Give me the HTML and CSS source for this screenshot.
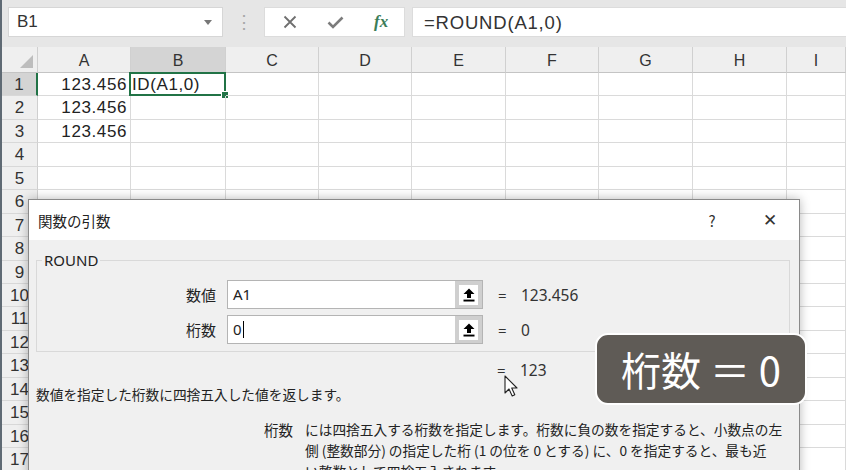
FILE: index.html
```html
<!DOCTYPE html>
<html lang="ja">
  <head>
    <meta charset="UTF-8">
    <meta name="viewport" content="width=device-width, initial-scale=1.0">
    <title>関数の引数</title>
    <link rel="stylesheet" href="styles.css">
  </head>
  <body>
    <div class="app">
      <div class="toolbar">
        <div class="namebox"><span>B1</span><span class="drop"></span></div>
        <div class="grip">⋮</div>
        <div class="fbuttons">
          <span class="fbtn">
            <svg width="14" height="14" viewBox="0 0 14 14"><path d="M1.5 1.5 L12.5 12.5 M12.5 1.5 L1.5 12.5" stroke="#6f6f6f" stroke-width="1.8" fill="none"/></svg>
          </span>
          <span class="fbtn">
            <svg width="17" height="13" viewBox="0 0 17 13"><path d="M1.5 6.5 L6 11 L15.5 1.5" stroke="#7c7c7c" stroke-width="2.6" fill="none"/></svg>
          </span>
          <span class="fbtn fx">fx</span>
        </div>
        <div class="formula">=ROUND(A1,0)</div>
      </div>

      <div class="sheet" id="sheet"></div>

      <div class="dialog">
        <div class="dlg-title">
          <span>関数の引数</span>
          <div class="dlg-buttons">
            <span>?</span>
            <span class="close">✕</span>
          </div>
        </div>
        <div class="dlg-body">
          <fieldset class="group">
            <legend>ROUND</legend>
            <div class="args">
              <label>数値</label>
              <div class="argbox"><span class="argtext">A1</span><span class="ref"><span class="ref-inner"><svg width="12" height="14" viewBox="0 0 12 14"><path d="M6 0.5 L11.5 6 H8 V10 H4 V6 H0.5 Z"/><rect x="0.5" y="11.6" width="11" height="1.9"/></svg></span></span></div>
              <span class="eq">=</span>
              <span class="val">123.456</span>

              <label>桁数</label>
              <div class="argbox"><span class="argtext">0<i class="caret"></i></span><span class="ref"><span class="ref-inner"><svg width="12" height="14" viewBox="0 0 12 14"><path d="M6 0.5 L11.5 6 H8 V10 H4 V6 H0.5 Z"/><rect x="0.5" y="11.6" width="11" height="1.9"/></svg></span></span></div>
              <span class="eq">=</span>
              <span class="val">0</span>
            </div>
          </fieldset>

          <div class="args result">
            <span></span>
            <span></span>
            <span class="eq">=</span>
            <span class="val">123</span>
          </div>

          <p class="summary">数値を指定した桁数に四捨五入した値を返します。</p>

          <div class="argdesc">
            <span class="argname">桁数</span>
            <p>には四捨五入する桁数を指定します。桁数に負の数を指定すると、小数点の左<br>側 (整数部分) の指定した桁 (1 の位を 0 とする) に、0 を指定すると、最も近<br>い整数として四捨五入されます。</p>
          </div>
        </div>
      </div>

      <div class="badge">桁数 ＝ 0</div>

      <svg class="cursor" width="15" height="23" viewBox="0 0 15 23">
        <path d="M1 1 V18 L5 14 L8.2 21 L10.8 19.8 L7.7 13 H13 Z" fill="#fff" stroke="#222" stroke-width="1.1" stroke-linejoin="round"/>
      </svg>
    </div>

    <script>
      // シートの見出しとセルを作る
      const cols = ['', 'A', 'B', 'C', 'D', 'E', 'F', 'G', 'H', 'I'];
      const values = { A1: '123.456', A2: '123.456', A3: '123.456', B1: 'ID(A1,0)' };
      const sheet = document.getElementById('sheet');

      for (let r = 0; r <= 17; r++) {
        cols.forEach(function (c, i) {
          const cell = document.createElement('div');
          if (r === 0) {
            cell.className = i === 0 ? 'corner' : 'col-head';
            cell.textContent = c;
            if (c === 'B') cell.classList.add('selected');
          } else if (i === 0) {
            cell.className = 'row-head';
            cell.textContent = r;
            if (r === 1) cell.classList.add('selected');
          } else {
            const key = c + r;
            cell.className = 'cell';
            if (values[key]) cell.textContent = values[key];
            if (c === 'A') cell.classList.add('num');
            if (key === 'B1') cell.classList.add('active');
          }
          sheet.appendChild(cell);
        });
      }
    </script>
  </body>
</html>
```

FILE: styles.css
```css
html, body {
  margin: 0;
  padding: 0;
}

body {
  font-family: "Liberation Sans", "Noto Sans CJK JP", sans-serif;
  color: #222;
}

.app {
  position: relative;
  width: 846px;
  height: 470px;
  overflow: hidden;
  background-color: #fff;
  border-left: 2px solid #5f6a74;
  box-sizing: border-box;
}

/* 数式バー */
.toolbar {
  display: flex;
  height: 47px;
  padding: 7px 0 0 6px;
  box-sizing: border-box;
  background-color: #e6e6e6;
}

.namebox {
  display: flex;
  align-items: center;
  justify-content: space-between;
  width: 215px;
  height: 30px;
  padding: 0 10px 0 8px;
  box-sizing: border-box;
  background-color: #fff;
  border: 1px solid #d6d6d6;
  font-size: 17px;
  color: #333;
}

.drop {
  width: 0;
  height: 0;
  border-left: 4px solid transparent;
  border-right: 4px solid transparent;
  border-top: 5px solid #777;
}

.grip {
  width: 41px;
  height: 30px;
  line-height: 30px;
  text-align: center;
  color: #a8a8a8;
  font-size: 18px;
}

.fbuttons {
  display: flex;
  width: 141px;
  height: 30px;
  padding-left: 2px;
  box-sizing: border-box;
  background-color: #fff;
  border: 1px solid #dcdcdc;
}

.fbtn {
  display: flex;
  align-items: center;
  justify-content: center;
  width: 46px;
}

.fx {
  font-family: "Liberation Serif", serif;
  font-style: italic;
  font-weight: bold;
  font-size: 17px;
  color: #3c7d58;
}

.formula {
  flex: 1;
  height: 30px;
  margin-left: 7px;
  padding-left: 11px;
  line-height: 29px;
  box-sizing: border-box;
  background-color: #fff;
  border: 1px solid #dcdcdc;
  border-right: none;
  font-size: 18.5px;
  letter-spacing: 0.8px;
  color: #333;
}

/* シート */
.sheet {
  display: grid;
  grid-template-columns: 36px 93px 95px 93px 93px 94px 93px 94px 94px 1fr;
  grid-template-rows: 26px;
  grid-auto-rows: 23.44px;
}

.sheet > div {
  box-sizing: border-box;
}

.corner {
  position: relative;
  background-color: #efefef;
  border-right: 1px solid #cfcfcf;
  border-bottom: 1px solid #c4c4c4;
}

.corner::after {
  content: "";
  position: absolute;
  right: 4px;
  bottom: 4px;
  width: 13px;
  height: 13px;
  background-color: #bdbdbd;
  clip-path: polygon(100% 0, 100% 100%, 0 100%);
}

.col-head {
  background-color: #efefef;
  border-right: 1px solid #d0d0d0;
  border-bottom: 1px solid #c4c4c4;
  text-align: center;
  line-height: 28px;
  font-size: 16px;
  color: #333;
}

.col-head.selected {
  background-color: #d4d4d4;
}

.row-head {
  background-color: #efefef;
  border-right: 1px solid #cfcfcf;
  border-bottom: 1px solid #d8d8d8;
  text-align: center;
  line-height: 23px;
  font-size: 17px;
  color: #333;
}

.row-head.selected {
  background-color: #d4d4d4;
  border-right: 2px solid #217346;
}

.cell {
  position: relative;
  border-right: 1px solid #dadada;
  border-bottom: 1px solid #dadada;
  padding: 0 3px;
  line-height: 23px;
  font-size: 17px;
  letter-spacing: 0.6px;
  white-space: nowrap;
  color: #222;
}

.cell.num {
  text-align: right;
}

.cell.active {
  padding-left: 1px;
}

.cell.active::before {
  content: "";
  position: absolute;
  left: -2px;
  top: -1px;
  right: -1px;
  bottom: -1px;
  border: 2px solid #217346;
}

.cell.active::after {
  content: "";
  position: absolute;
  right: -4px;
  bottom: -4px;
  width: 6px;
  height: 6px;
  background-color: #217346;
  border: 1px solid #fff;
}

/* ダイアログ */
.dialog {
  position: absolute;
  left: 26px;
  top: 199px;
  width: 772px;
  height: 300px;
  box-sizing: border-box;
  background-color: #f0f0f0;
  border: 1px solid #8a8a8a;
  box-shadow: 0 0 10px rgba(0, 0, 0, 0.28);
  font-family: "Noto Sans", "Noto Sans CJK JP", sans-serif;
}

.dlg-title {
  display: flex;
  align-items: center;
  height: 40px;
  padding-left: 9px;
  background-color: #fff;
  font-family: "Noto Sans CJK JP", sans-serif;
  font-size: 14.5px;
  color: #222;
}

.dlg-buttons {
  display: flex;
  margin-left: auto;
}

.dlg-buttons span {
  width: 58px;
  text-align: center;
  font-size: 15px;
  color: #333;
}

.dlg-buttons .close {
  font-size: 17px;
  font-family: "DejaVu Sans", sans-serif;
  font-weight: 300;
}

.dlg-body {
  padding: 0 9px 0 7px;
}

.group {
  margin: 10px 0 0;
  padding: 10px 0 7px;
  min-width: 0;
  border: 1px solid #d9d9d9;
}

.group legend {
  margin-left: 5px;
  padding: 0 2px;
  font-size: 15px;
  line-height: 20px;
  color: #222;
}

.args {
  display: grid;
  grid-template-columns: 179px 256px 16px auto;
  column-gap: 11px;
  row-gap: 6px;
  align-items: center;
}

.args label {
  text-align: right;
  font-family: "Noto Sans CJK JP", sans-serif;
  font-size: 15px;
  color: #222;
}

.argbox {
  display: flex;
  height: 29px;
  box-sizing: border-box;
  background-color: #fff;
  border: 1px solid #b4b4b4;
}

.argtext {
  flex: 1;
  padding-left: 5px;
  line-height: 27px;
  font-size: 15px;
  color: #222;
}

.caret {
  display: inline-block;
  width: 1px;
  height: 17px;
  margin-left: 1px;
  vertical-align: -3px;
  background-color: #000;
}

.ref {
  display: flex;
  align-items: center;
  justify-content: center;
  width: 27px;
  background-color: #cfcfcf;
}

.ref-inner {
  display: flex;
  align-items: center;
  justify-content: center;
  width: 19px;
  height: 20px;
  background-color: #fff;
}

.eq {
  padding-left: 4px;
  font-size: 15px;
  color: #333;
}

.val {
  font-size: 15.5px;
  color: #333;
}

.result {
  margin-top: 8px;
  line-height: 20px;
}

.summary {
  margin: 4px 0 0;
  line-height: 20px;
  font-family: "Noto Sans CJK JP", sans-serif;
  font-size: 13.7px;
  white-space: nowrap;
}

.argdesc {
  display: flex;
  margin-top: 15px;
  font-family: "Noto Sans CJK JP", sans-serif;
  font-size: 13.7px;
  line-height: 21px;
}

.argname {
  width: 257px;
  text-align: right;
  font-size: 14.5px;
  flex-shrink: 0;
}

.argdesc p {
  margin: 0 0 0 12px;
  white-space: nowrap;
}

/* 注釈 */
.badge {
  position: absolute;
  left: 593px;
  top: 333px;
  width: 212px;
  height: 72px;
  box-sizing: border-box;
  display: flex;
  align-items: center;
  justify-content: center;
  background-color: #5f5b56;
  border: 2.5px solid #fff;
  border-radius: 13px;
  color: #fff;
  font-family: "Noto Sans CJK JP", sans-serif;
  font-size: 40px;
  white-space: nowrap;
}

.cursor {
  position: absolute;
  left: 502px;
  top: 375px;
}
```
